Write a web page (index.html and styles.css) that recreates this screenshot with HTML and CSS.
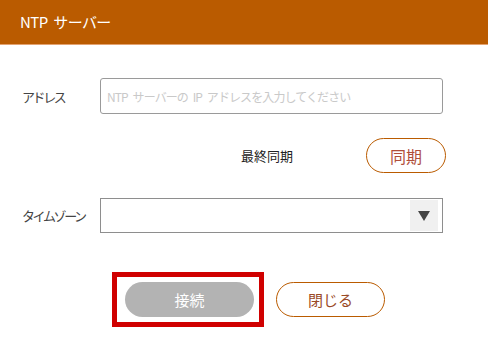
FILE: index.html
```html
<!DOCTYPE html>
<html lang="ja">
<head>
<meta charset="utf-8">
<link rel="stylesheet" href="styles.css">
</head>
<body>
<div class="dialog">
  <div class="header">NTP サーバー</div>
  <div class="content">
    <div class="row row-address">
      <div class="label">アドレス</div>
      <input class="text-input" type="text" placeholder="NTP サーバーの IP アドレスを入力してください">
    </div>
    <div class="row row-sync">
      <div class="sync-label">最終同期</div>
      <button class="btn btn-outline btn-sync">同期</button>
    </div>
    <div class="row row-tz">
      <div class="label">タイムゾーン</div>
      <div class="select">
        <div class="select-value"></div>
        <div class="select-arrow">
          <svg width="12" height="10" viewBox="0 0 12 10"><path d="M0 0 H12 L6 10 Z" fill="#444"/></svg>
        </div>
      </div>
    </div>
    <div class="row row-actions">
      <div class="highlight">
        <button class="btn btn-disabled">接続</button>
      </div>
      <button class="btn btn-outline btn-close">閉じる</button>
    </div>
  </div>
</div>
</body>
</html>
```
FILE: styles.css
```css
* { box-sizing: border-box; }
html, body {
  margin: 0;
  padding: 0;
  background: #ffffff;
}
body {
  width: 488px;
  height: 353px;
  overflow: hidden;
  font-family: "Noto Sans CJK JP", "Noto Sans", sans-serif;
}
.dialog {
  width: 488px;
  height: 353px;
  display: flex;
  flex-direction: column;
}
.header {
  height: 45px;
  background: #ba5b00;
  border-bottom: 1px solid #e3a270;
  color: #ffffff;
  font-size: 15px;
  line-height: 44px;
  padding-left: 20px;
  letter-spacing: -0.6px;
  word-spacing: 3px;
}
.content {
  display: flex;
  flex-direction: column;
}
.row {
  display: flex;
  align-items: center;
}
.row-address {
  margin-top: 33px;
}
.label {
  width: 100px;
  padding-left: 22px;
  font-size: 13px;
  color: #444;
  letter-spacing: -2.4px;
}
.text-input {
  width: 343px;
  height: 36px;
  border: 1px solid #9a9a9a;
  border-radius: 3px;
  padding: 0 0 0 6px;
  font-family: "Noto Sans CJK JP", "Noto Sans", sans-serif;
  font-size: 12px;
  outline: none;
  letter-spacing: -0.9px;
  word-spacing: 3px;
}
.text-input::placeholder {
  color: #c9c9c9;
}
.row-sync {
  margin-top: 24px;
  height: 35px;
}
.sync-label {
  margin-left: 241px;
  width: 125px;
  font-size: 13px;
  color: #222;
}
.btn {
  font-family: "Noto Sans CJK JP", "Noto Sans", sans-serif;
  height: 35px;
  border-radius: 18px;
  font-size: 15px;
  padding: 0;
  cursor: pointer;
}
.btn-outline {
  background: #ffffff;
  border: 1px solid #ba5b00;
  color: #9a4a26;
}
.btn-sync {
  width: 80px;
  color: #b04e3a;
  font-size: 16px;
}
.row-tz {
  margin-top: 25px;
}
.select {
  width: 343px;
  height: 35px;
  border: 1px solid #8e8e8e;
  display: flex;
  align-items: stretch;
  padding: 1px 4px 1px 0;
  background: #fff;
}
.select-value {
  flex: 1;
}
.select-arrow {
  width: 28px;
  background: #f0f0f0;
  display: flex;
  align-items: center;
  justify-content: center;
}
.row-actions {
  margin-top: 39px;
  margin-left: 112px;
}
.highlight {
  border: 5px solid #d00000;
  padding: 5px 5px 5px 8px;
}
.btn-disabled {
  width: 129px;
  background: #b3b3b3;
  border: none;
  color: #ffffff;
  display: block;
}
.btn-close {
  margin-left: 12px;
  width: 109px;
}
```
